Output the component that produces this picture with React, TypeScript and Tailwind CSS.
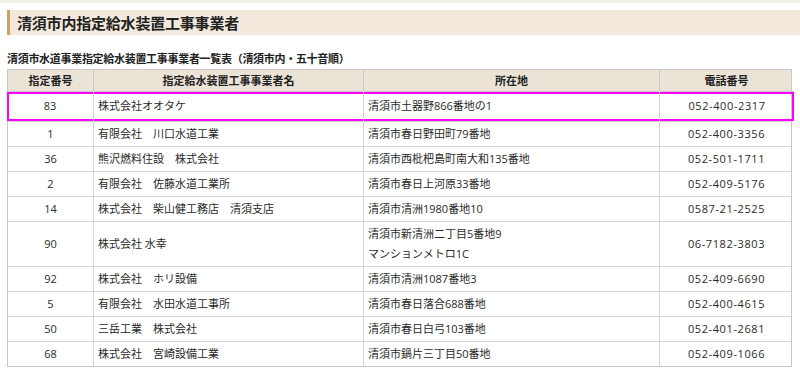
const rows: { no: string; name: string; addr: string[]; tel: string }[] = [
  { no: "1", name: "有限会社　川口水道工業", addr: ["清須市春日野田町79番地"], tel: "052-400-3356" },
  { no: "36", name: "熊沢燃料住設　株式会社", addr: ["清須市西枇杷島町南大和135番地"], tel: "052-501-1711" },
  { no: "2", name: "有限会社　佐藤水道工業所", addr: ["清須市春日上河原33番地"], tel: "052-409-5176" },
  { no: "14", name: "株式会社　柴山健工務店　清須支店", addr: ["清須市清洲1980番地10"], tel: "0587-21-2525" },
  { no: "90", name: "株式会社 水幸", addr: ["清須市新清洲二丁目5番地9", "マンションメトロ1C"], tel: "06-7182-3803" },
  { no: "92", name: "株式会社　ホリ設備", addr: ["清須市清洲1087番地3"], tel: "052-409-6690" },
  { no: "5", name: "有限会社　水田水道工事所", addr: ["清須市春日落合688番地"], tel: "052-400-4615" },
  { no: "50", name: "三岳工業　株式会社", addr: ["清須市春日白弓103番地"], tel: "052-401-2681" },
  { no: "68", name: "株式会社　宮崎設備工業", addr: ["清須市鍋片三丁目50番地"], tel: "052-409-1066" },
];

const cols = "grid grid-cols-[86px_270px_296px_133px]";

export default function App() {
  return (
    <div
      className="w-[800px] h-[374px] overflow-hidden bg-white text-[#222]"
      style={{ fontFamily: '"Noto Sans CJK JP", "Noto Sans", sans-serif' }}
    >
      <div className="h-[3px] bg-[#f4f1ec]" />

      {/* page title */}
      <div className="mt-[7px] ml-[7px] h-[25px] flex items-center bg-[#f2e9dc] border-l-[3px] border-[#c9a26a]">
        <h1 className="pl-[7px] text-[15px] font-bold leading-none tracking-[-0.2px] text-[#222]">
          清須市内指定給水装置工事事業者
        </h1>
      </div>

      <h2 className="mt-[15px] ml-[7px] text-[11px] font-bold leading-[16px] tracking-[-0.3px]">
        清須市水道事業指定給水装置工事事業者一覧表（清須市内・五十音順）
      </h2>

      {/* table */}
      <div
        className="mt-[3px] ml-[7px] w-[785px] border border-[#c9c9c9] text-[11px] text-[#2a2a2a]"
        style={{ fontFamily: '"Open Sans", "Noto Sans CJK JP", sans-serif' }}
      >
        <div
          className={`${cols} h-[21px] bg-[#ebe4d6] font-bold leading-[21px] text-center text-[#222]`}
          style={{ fontFamily: '"Noto Sans CJK JP", sans-serif' }}
        >
          <div className="border-r border-[#c9c9c9]">指定番号</div>
          <div className="border-r border-[#c9c9c9]">指定給水装置工事事業者名</div>
          <div className="border-r border-[#c9c9c9]">所在地</div>
          <div>電話番号</div>
        </div>

        <div className="grid grid-cols-[87px_270px_296px_134px] -mx-[1px] w-[787px] h-[30px] border-t border-[#c9c9c9] ring-2 ring-inset ring-[#f0f]">
          <div className="flex items-center justify-center border-r border-[#d4d4d4]">83</div>
          <div className="flex items-center px-[4px] border-r border-[#d4d4d4]">株式会社オオタケ</div>
          <div className="flex items-center px-[4px] border-r border-[#d4d4d4]">清須市土器野866番地の1</div>
          <div className="flex items-center justify-center tracking-[0.6px]">052-400-2317</div>
        </div>

        {rows.map((r) => (
          <div key={r.no} className={`${cols} border-t border-[#d4d4d4] leading-[20px]`}>
            <div className="flex items-center justify-center py-[2px] border-r border-[#d4d4d4]">{r.no}</div>
            <div className="flex items-center px-[4px] py-[2px] border-r border-[#d4d4d4]">{r.name}</div>
            <div className="flex flex-col justify-center px-[4px] py-[2px] border-r border-[#d4d4d4]">
              {r.addr.map((a) => (
                <span key={a}>{a}</span>
              ))}
            </div>
            <div className="flex items-center justify-center py-[2px] tracking-[0.6px]">{r.tel}</div>
          </div>
        ))}
      </div>
    </div>
  );
}
